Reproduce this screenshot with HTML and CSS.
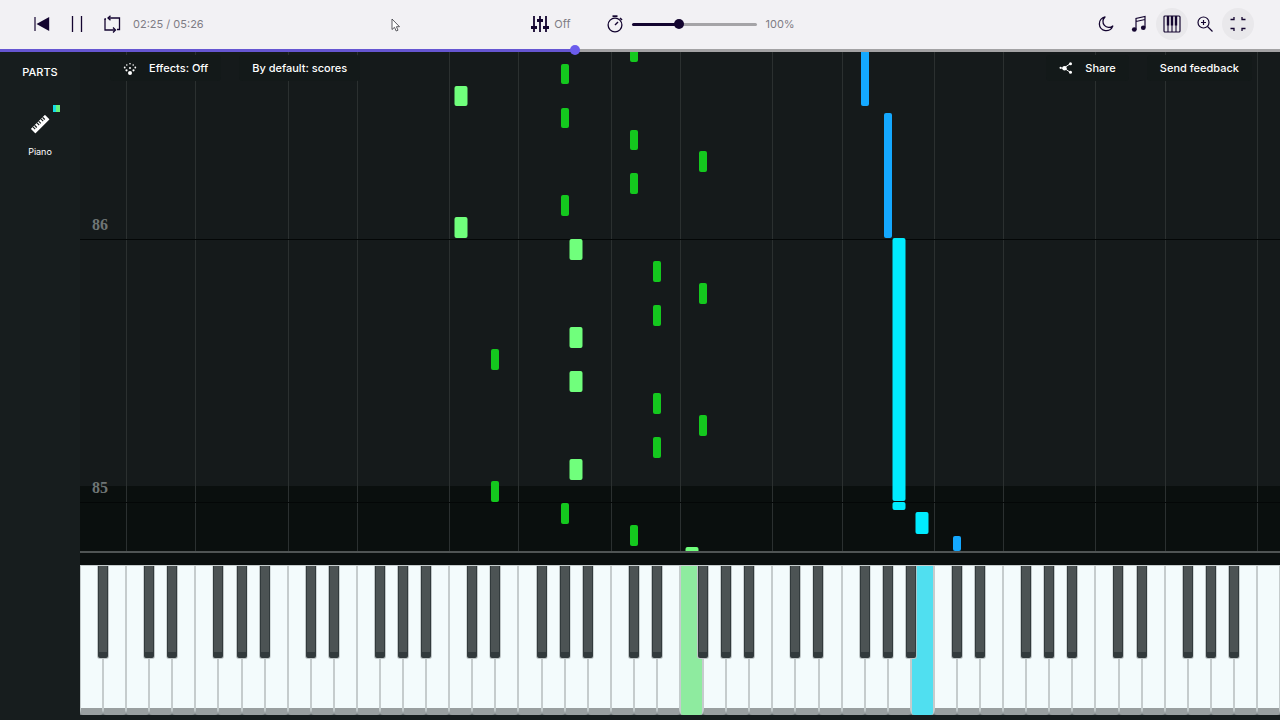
FILE: index.html
```html
<!DOCTYPE html>
<html lang="en">
<head>
<meta charset="utf-8">
<title>Piano player</title>
<link rel="stylesheet" href="styles.css">
</head>
<body>
<header class="topbar">
  <div class="transport">
    <button class="icon-btn" aria-label="Back to start">
      <svg width="16" height="16" viewBox="0 0 16 16"><path d="M1 1v14" stroke="currentColor" stroke-width="1.200"/><path d="M15.200 1v14L2.500 8z" fill="currentColor"/></svg>
    </button>
    <button class="icon-btn" aria-label="Pause">
      <svg width="16" height="16" viewBox="0 0 16 16"><path d="M3.500 0v16M12.500 0v16" stroke="currentColor" stroke-width="1.300"/></svg>
    </button>
    <button class="icon-btn" aria-label="Loop">
      <svg width="18" height="18" viewBox="0 0 18 18" fill="none" stroke="currentColor" stroke-width="1.300"><path d="M2 4v11h10M5 3h11.500v11.500H14"/><path d="M7.500.8L5 3l2.500 2.200M10 12.500l2.500 2.500-2.500 2.500M1.400 4H3"/></svg>
    </button>
    <span class="value time">02:25 / 05:26</span>
  </div>
  <div class="settings">
    <button class="metronome">
      <svg width="20" height="18" viewBox="0 0 20 18" stroke="currentColor" fill="none"><path d="M4 1v16M10 1v16M16 1v16" stroke-width="1.800"/><path d="M1 12.500h6M7 5.500h6M13 12.500h6" stroke-width="2.800"/></svg>
      <span class="value">Off</span>
    </button>
    <label class="speed">
      <svg width="18" height="18" viewBox="0 0 18 18" fill="none" stroke="currentColor"><circle cx="9" cy="10" r="6.900" stroke-width="1.300"/><path d="M9 10l3-3" stroke-width="1.400"/><path d="M6.500 1.200h5" stroke-width="1.800"/><path d="M14 3l2 2" stroke-width="1.600"/></svg>
      <input class="speed-slider" type="range" min="0" max="100" value="36" aria-label="Speed">
      <span class="value">100%</span>
    </label>
  </div>
  <div class="views">
    <button class="icon-btn" aria-label="Dark mode">
      <svg width="16" height="16" viewBox="0 0 16 16" fill="none" stroke="currentColor" stroke-width="1.300" stroke-linejoin="round"><path d="M7 1a6.900 6.900 0 1 0 7.800 9A5.400 5.400 0 0 1 7 1z"/></svg>
    </button>
    <button class="icon-btn" aria-label="Sheet music">
      <svg width="16" height="18" viewBox="0 0 16 18" fill="none" stroke="currentColor" stroke-width="1.200"><path d="M5 14.500V3.500L14 1.500v11M5 6.500l9-2"/><ellipse cx="3.300" cy="14.500" rx="2.400" ry="2.300" fill="currentColor" stroke="none"/><ellipse cx="12.300" cy="12.700" rx="2.400" ry="2.300" fill="currentColor" stroke="none"/></svg>
    </button>
    <button class="icon-btn on" aria-label="Keyboard" aria-pressed="true">
      <svg width="18" height="18" viewBox="0 0 18 18" fill="none" stroke="currentColor"><rect x="1" y="1" width="16" height="16" rx="1" stroke-width="1.200"/><path d="M5 10v7M9 10v7M13 10v7" stroke-width="1.100"/><path d="M5 1v9.500M9 1v9.500M13 1v9.500" stroke-width="2.400"/></svg>
    </button>
    <button class="icon-btn" aria-label="Zoom in">
      <svg width="16" height="16" viewBox="0 0 16 16" fill="none" stroke="currentColor" stroke-width="1.200"><circle cx="6.500" cy="6.500" r="5.500"/><path d="M10.500 10.500l5 5M6.500 4v5M4 6.500h5"/></svg>
    </button>
    <button class="icon-btn on" aria-label="Exit fullscreen" aria-pressed="true">
      <svg width="16" height="16" viewBox="0 0 16 16" fill="none" stroke="currentColor" stroke-width="1.300"><path d="M.5 3.500H4V1M15.500 3.500H12V1M.5 12.500H4V15M15.500 12.500H12V15"/></svg>
    </button>
  </div>
  <svg class="pointer" width="10" height="14" viewBox="0 0 10 14"><path d="M1 1v10.500l2.500-2.200 1.700 3.700 1.800-.8-1.600-3.500H8.500z" fill="#fff" stroke="#33333a" stroke-width=".8"/></svg>
</header>
<input class="seek" type="range" min="0" max="1000" value="449" aria-label="Song position">
<main class="player">
  <aside class="parts">
    <h1 class="parts-title">PARTS</h1>
    <button class="part">
      <span class="part-icon">
        <svg width="20" height="20" viewBox="0 0 20 20"><g transform="rotate(-45 10 10)"><rect x="0" y="7" width="20" height="6.500" rx=".6" fill="#fff"/><path d="M3 7v3.200M5.300 7v3.200M8.700 7v3.200M11 7v3.200M14.300 7v3.200M16.600 7v3.200" stroke="#171d1d" stroke-width="1.200"/></g></svg>
        <span class="part-colors"></span>
      </span>
      <span class="part-name">Piano</span>
    </button>
  </aside>
  <section class="stage">
    <div class="roll" id="roll">
      <div class="toolbar">
        <div class="toolbar-group">
          <button class="chip">
            <svg width="14" height="14" viewBox="0 0 14 14" fill="#fff"><circle cx="7" cy="12" r="2"/><circle cx="7" cy="7" r="1"/><circle cx="7" cy="2.800" r=".8"/><circle cx="3.500" cy="9.300" r="1.100"/><circle cx="10.500" cy="9.300" r="1.100"/><circle cx="3.800" cy="4" r=".8"/><circle cx="10.200" cy="4" r=".8"/><circle cx="1.700" cy="6.500" r=".9"/><circle cx="12.300" cy="6.500" r=".9"/></svg>
            Effects: Off
          </button>
          <button class="chip">By default: scores</button>
        </div>
        <div class="toolbar-group">
          <button class="chip">
            <svg width="14" height="14" viewBox="0 0 14 14" fill="#fff" stroke="#fff"><path d="M11.500 2.500L5 7l6.500 4.500M1 7h4" fill="none" stroke-width="1"/><circle cx="5.500" cy="7.200" r="2.200" stroke="none"/><circle cx="11.500" cy="2.700" r="1.500" stroke="none"/><circle cx="11.500" cy="11.300" r="1.500" stroke="none"/><circle cx="1.500" cy="6.800" r="1" stroke="none"/></svg>
            Share
          </button>
          <button class="chip">Send feedback</button>
        </div>
      </div>
    </div>
    <div class="keyboard" id="keyboard"></div>
  </section>
</main>
<script src="script.js"></script>
</body>
</html>
```
FILE: styles.css
```css
* { box-sizing: border-box; }

body {
  margin: 0;
  min-height: 100vh;
  display: flex;
  flex-direction: column;
  background: #161c1d;
  color: #fff;
  font-family: Inter, "Liberation Sans", sans-serif;
  font-size: 12px;
  overflow: hidden;
}

button {
  font: inherit;
  color: inherit;
  background: none;
  border: 0;
  padding: 0;
}

svg { display: block; flex: none; }

/* Top bar */
.topbar {
  position: relative;
  display: grid;
  grid-template-columns: 1fr auto 1fr;
  align-items: center;
  min-height: 49px;
  padding: 0 26px 1px;
  background: #f2f1f4;
  color: #140530;
}

.transport, .settings, .views, .metronome, .speed {
  display: flex;
  align-items: center;
}

.icon-btn {
  width: 32px;
  height: 32px;
  border-radius: 50%;
  display: grid;
  place-items: center;
}

.icon-btn.on { background: #e9e8eb; }
.transport { gap: 3px; }
.time { margin-left: 2px; }
.value { font-size: 11px; color: #7e7c84; }
.settings { gap: 36px; padding-left: 45px; }
.metronome { gap: 4px; }
.speed { gap: 8px; }
.views { gap: 1px; justify-content: flex-end; }

.pointer {
  position: absolute;
  top: 18px;
  left: 391px;
}

input[type="range"] {
  appearance: none;
  margin: 0;
  background: none;
  color: #140530;
}

.speed-slider { width: 125px; height: 12px; }

.speed-slider::-webkit-slider-runnable-track {
  height: 3px;
  border-radius: 2px;
  background: linear-gradient(to right, #140530 var(--fill), #a5a4a7 var(--fill));
}

.speed-slider::-webkit-slider-thumb {
  appearance: none;
  width: 10px;
  height: 10px;
  margin-top: -4px;
  border-radius: 50%;
  background: #140530;
}

.seek {
  position: relative;
  z-index: 2;
  display: block;
  width: 100%;
  height: 3px;
}

.seek::-webkit-slider-runnable-track {
  height: 3px;
  background: linear-gradient(to right, #6656d2 var(--fill), #a3a2a4 var(--fill));
}

.seek::-webkit-slider-thumb {
  appearance: none;
  width: 10px;
  height: 10px;
  margin-top: -4px;
  border-radius: 50%;
  background: #6b5cec;
}

/* Parts list */
.player { flex: 1; display: flex; }

.parts {
  width: 80px;
  flex: none;
  display: flex;
  flex-direction: column;
  align-items: center;
  gap: 25px;
  padding-top: 12px;
  background: #171d1e;
}

.parts-title {
  margin: 0;
  font-size: 11px;
  line-height: 16px;
  font-weight: 500;
}

.part {
  display: flex;
  flex-direction: column;
  align-items: center;
  gap: 11px;
}

.part-icon { position: relative; width: 40px; padding: 9px 10px 0; }

.part-colors {
  position: absolute;
  top: 0;
  right: 0;
  width: 7px;
  height: 7px;
  background: linear-gradient(to right, #14dce6 50%, #66f07c 50%);
}

.part-name { font-size: 9px; line-height: 14px; }

/* Falling notes */
.stage { flex: 1; display: flex; flex-direction: column; padding-bottom: 5px; }

.roll {
  position: relative;
  flex: 1;
  overflow: hidden;
  background: #151a1b;
  border-bottom: 2px solid #4f5454;
}

.roll::before {
  content: "";
  position: absolute;
  inset: auto 0 0;
  height: 65px;
  background: #0a0f0e;
}

.octave-line {
  position: absolute;
  top: 0;
  bottom: 0;
  width: 1px;
  background: #2b3030;
}

.bar-line {
  position: absolute;
  left: 0;
  right: 0;
  height: 1px;
  background: #040707;
}

.bar-number {
  position: absolute;
  left: 12px;
  bottom: 6px;
  font: bold 16px/18px "Liberation Serif", serif;
  color: #6f7575;
}

.note {
  position: absolute;
  width: 8px;
  border-radius: 2px;
  transform: translateX(-50%);
}

.note.natural { width: 13px; }
.note.left { background: #14c81e; }
.note.left.natural { background: #70ff7c; }
.note.right { background: #14a8ff; }
.note.right.natural { background: #00ebff; }

.toolbar {
  position: absolute;
  z-index: 1;
  top: 3px;
  left: 30px;
  right: 28px;
  display: flex;
  justify-content: space-between;
}

.toolbar-group { display: flex; gap: 18px; }

.chip {
  display: flex;
  align-items: center;
  gap: 12px;
  min-height: 26px;
  padding: 0 13px;
  border-radius: 4px;
  background: #131919;
  font-size: 11px;
  font-weight: 500;
}

/* Keyboard */
.keyboard {
  position: relative;
  display: flex;
  height: 162px;
  padding-top: 12px;
  background: #0a0f0f;
}

.key-bed {
  position: absolute;
  inset: auto 0 0;
  height: 8px;
  background: #6f7778;
}

.white-key {
  position: relative;
  flex: 1;
  background: #f3fbfc;
  border: 1px solid #c5cccd;
  border-bottom: 7px solid #999fa0;
  border-radius: 0 0 3px 3px;
}

.white-key.pressed-left { background: #8eeb9f; border-bottom: 0; }
.white-key.pressed-right { background: #50dff0; border-bottom: 0; }

.black-key {
  position: absolute;
  top: 13px;
  width: 10px;
  height: 92px;
  transform: translateX(-50%);
  background: #4c5354;
  border: 1px solid #323a3c;
  border-width: 0 1px 6px;
  border-radius: 0 0 2px 2px;
  box-shadow: 0 0 0 1px #bfc6c7;
  clip-path: inset(0 -1px -1px -1px);
}
```
FILE: script.js
```js
const WHITE_KEYS = 52;
const roll = document.getElementById("roll");
const keyboard = document.getElementById("keyboard");

// Horizontal place of a key, counted in white-key widths from the left.
const place = (key) => `${(key * 100) / WHITE_KEYS}%`;

function add(parent, tag, className, style = {}, text = "") {
  const el = document.createElement(tag);
  el.className = className;
  Object.assign(el.style, style);
  el.textContent = text;
  parent.append(el);
  return el;
}

// Guide lines stand at each C (2, 9, ...) and F (5, 12, ...).
for (let i = 1; i < WHITE_KEYS; i++) {
  if (i % 7 === 2 || i % 7 === 5) add(roll, "div", "octave-line", { left: place(i) });
}

// Bars: number, distance above the hit line.
for (const [number, y] of [[86, 311], [85, 48]]) {
  const line = add(roll, "div", "bar-line", { bottom: `${y}px` });
  add(line, "span", "bar-number", {}, number);
}

// Notes: hand, key place, start above the hit line, length.
const notes = [
  ["left", 16.5, 445, 20], ["left", 16.5, 313, 21],
  ["left", 18, 181, 21], ["left", 18, 49, 21],
  ["left", 21, 467, 20], ["left", 21, 423, 20], ["left", 21, 335, 21], ["left", 21, 27, 21],
  ["left", 21.5, 291, 21], ["left", 21.5, 203, 21], ["left", 21.5, 159, 21], ["left", 21.5, 71, 21],
  ["left", 24, 489, 20], ["left", 24, 401, 20], ["left", 24, 357, 21], ["left", 24, 5, 21],
  ["left", 25, 269, 21], ["left", 25, 225, 21], ["left", 25, 137, 21], ["left", 25, 93, 21],
  ["left", 26.5, -17, 21],
  ["left", 27, 379, 21], ["left", 27, 247, 21], ["left", 27, 115, 21],
  ["right", 34, 445, 80], ["right", 35, 313, 125],
  ["right", 35.5, 50, 263], ["right", 35.5, 41, 8],
  ["right", 36.5, 17, 22], ["right", 38, 0, 15]
];
for (const [hand, key, start, length] of notes) {
  const natural = Number.isInteger(key) ? "" : " natural";
  add(roll, "div", `note ${hand}${natural}`, {
    left: place(key), bottom: `${start}px`, height: `${length}px`
  });
}

// White keys, then the black keys over their joints.
add(keyboard, "div", "key-bed");
const names = ["A", "B", "C", "D", "E", "F", "G"];
const pressed = { 26: " pressed-left", 36: " pressed-right" };
for (let i = 0; i < WHITE_KEYS; i++) {
  add(keyboard, "button", "white-key" + (pressed[i] || "")).setAttribute("aria-label", names[i % 7]);
}
for (let i = 1; i < WHITE_KEYS; i++) {
  if (i % 7 === 2 || i % 7 === 5) continue;
  add(keyboard, "button", "black-key", { left: place(i) }).setAttribute("aria-label", names[(i - 1) % 7] + " sharp");
}

// Filled part of each slider.
for (const slider of document.querySelectorAll("input[type=range]")) {
  const paint = () => slider.style.setProperty("--fill", `${(slider.value * 100) / slider.max}%`);
  slider.addEventListener("input", paint);
  paint();
}
```
